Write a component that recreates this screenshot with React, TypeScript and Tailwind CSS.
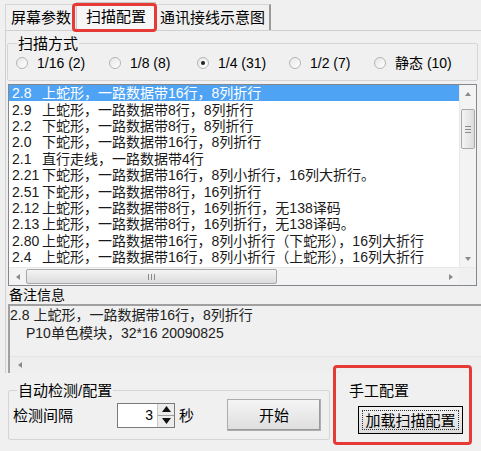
const rows: [string, string][] = [
  ["2.8", "上蛇形，一路数据带16行，8列折行"],
  ["2.9", "上蛇形，一路数据带8行，8列折行"],
  ["2.2", "下蛇形，一路数据带8行，8列折行"],
  ["2.0", "下蛇形，一路数据带16行，8列折行"],
  ["2.1", "直行走线，一路数据带4行"],
  ["2.21", "下蛇形，一路数据带16行，8列小折行，16列大折行。"],
  ["2.51", "下蛇形，一路数据带8行，16列折行"],
  ["2.12", "上蛇形，一路数据带8行，16列折行，无138译码"],
  ["2.13", "上蛇形，一路数据带8行，16列折行，无138译码。"],
  ["2.80", "上蛇形，一路数据带16行，8列小折行（下蛇形），16列大折行"],
  ["2.4", "上蛇形，一路数据带16行，8列小折行（上蛇形），16列大折行"],
];

const modes = [
  { label: "1/16 (2)", w: "w-[93px]" },
  { label: "1/8 (8)", w: "w-[88px]" },
  { label: "1/4 (31)", w: "w-[92px]", on: true },
  { label: "1/2 (7)", w: "w-[85px]" },
  { label: "静态 (10)", w: "w-[90px]" },
];

function Radio({ on }: { on?: boolean }) {
  return (
    <span className="w-[12px] h-[12px] rounded-full border border-[#b4b4b4] bg-gradient-to-br from-[#e6e6e6] to-white flex items-center justify-center shrink-0">
      {on && <span className="w-[4px] h-[4px] rounded-full bg-[#222]" />}
    </span>
  );
}

function Arrow({ dir }: { dir: "up" | "down" | "left" | "right" }) {
  const pts = {
    up: "1,6 4,2 7,6",
    down: "1,2 4,6 7,2",
    left: "6,1 2,4 6,7",
    right: "2,1 6,4 2,7",
  }[dir];
  return (
    <svg width="8" height="8" viewBox="0 0 8 8">
      <polygon points={pts} fill="#8a8a8a" />
    </svg>
  );
}

export default function App() {
  return (
    <div
      className="relative w-[481px] h-[451px] bg-[#f0f0f0] overflow-hidden text-black"
      style={{ fontFamily: '"Liberation Sans", "Noto Sans CJK SC", sans-serif' }}
    >
      {/* tabs */}
      <div className="flex items-end h-[30px] pl-[5px] text-[15px] leading-none">
        <div className="h-[26px] px-[5px] flex items-center border-t border-l border-[#d6d6d6]">屏幕参数</div>
        <div className="h-[28px] w-[80px] flex items-center justify-center bg-[#f6f6f6] border-t border-l border-r border-[#c8c8c8]">扫描配置</div>
        <div className="h-[26px] px-[4px] flex items-center border-t border-r-2 border-[#d6d6d6] border-r-[#9a9a9a]">通讯接线示意图</div>
      </div>

      {/* tab panel */}
      <div className="ml-[5px] w-[476px] h-[343px] border-t border-l border-[#d0d0d0] pl-[1px] flex flex-col">
        <fieldset className="mt-[3px] w-[471px] h-[47px] border border-[#d5d5d5] rounded-[2px] pl-[8px]">
          <legend className="ml-[1px] px-[1px] text-[15px] leading-[19px]">扫描方式</legend>
          <div className="flex items-center h-[20px] text-[14px] leading-none">
            {modes.map((m) => (
              <div key={m.label} className={`flex items-center gap-[9px] ${m.w}`}>
                <Radio on={m.on} />
                <span>{m.label}</span>
              </div>
            ))}
          </div>
        </fieldset>

        {/* list box */}
        <div className="mt-[3px] ml-[1px] w-[469px] h-[202px] border border-[#828790] bg-white flex flex-col">
          <div className="flex flex-1 min-h-0">
            <div className="flex-1 overflow-hidden text-[14px] leading-none">
              {rows.map(([n, t], i) => (
                <div
                  key={n}
                  className={`h-[16.4px] flex items-center whitespace-nowrap pl-[3px] ${i === 0 ? "bg-[#4fa3f5] text-white" : "text-[#1a1a1a]"}`}
                >
                  <span className="w-[30px] shrink-0">{n}</span>
                  <span>{t}</span>
                </div>
              ))}
            </div>
            <div className="w-[17px] bg-[#f3f3f3] flex flex-col items-center border-l border-[#e8e8e8]">
              <div className="h-[17px] flex items-center justify-center"><Arrow dir="up" /></div>
              <div className="mt-[7px] w-[14px] h-[40px] rounded-[2px] border border-[#a8a8a8] bg-gradient-to-r from-[#f4f4f4] to-[#dcdcdc] flex flex-col items-center justify-center gap-[2px]">
                <span className="w-[6px] h-px bg-[#8a8a8a]" />
                <span className="w-[6px] h-px bg-[#8a8a8a]" />
                <span className="w-[6px] h-px bg-[#8a8a8a]" />
              </div>
              <div className="flex-1" />
              <div className="h-[17px] flex items-center justify-center"><Arrow dir="down" /></div>
            </div>
          </div>
          <div className="h-[18px] flex bg-[#f3f3f3] border-t border-[#e8e8e8]">
            <div className="w-[17px] flex items-center justify-center"><Arrow dir="left" /></div>
            <div className="w-[251px] my-[1px] rounded-[2px] border border-[#a8a8a8] bg-gradient-to-b from-[#f4f4f4] to-[#dcdcdc] flex items-center justify-center gap-[2px]">
              <span className="w-px h-[6px] bg-[#8a8a8a]" />
              <span className="w-px h-[6px] bg-[#8a8a8a]" />
              <span className="w-px h-[6px] bg-[#8a8a8a]" />
            </div>
            <div className="flex-1" />
            <div className="w-[17px] flex items-center justify-center"><Arrow dir="right" /></div>
            <div className="w-[17px] bg-[#f0f0f0]" />
          </div>
        </div>

        <div className="mt-[1px] ml-[2px] h-[17px] text-[14px] leading-[17px]">备注信息</div>

        {/* remark box */}
        <div className="ml-[1px] flex-1 border-t-2 border-l-2 border-[#a0a0a0] flex flex-col">
          <div className="flex-1 text-[14px] leading-[18px] text-[#222]">
            <div className="flex whitespace-nowrap">
              <span className="pr-[4px]">2.8</span>
              <span>上蛇形，一路数据带16行，8列折行</span>
            </div>
            <div className="pl-[16px] whitespace-nowrap">P10单色模块，32*16 20090825</div>
          </div>
          <div className="h-[17px] bg-[#eeeeee] border-t border-[#e4e4e4] flex items-center pl-[6px]">
            <Arrow dir="left" />
          </div>
        </div>
      </div>

      {/* bottom groups */}
      <div className="flex mt-[8px] text-[15px] leading-none">
        <fieldset className="ml-[8px] w-[322px] h-[59px] border border-[#d5d5d5] rounded-[2px] px-[4px]">
          <legend className="ml-[4px] px-[1px] leading-[19px]">自动检测/配置</legend>
          <div className="flex items-center h-[36px] -mt-[3px]">
            <span className="w-[104px]">检测间隔</span>
            <div className="w-[58px] h-[25px] border border-[#7a7a7a] bg-white flex">
              <span className="flex-1 flex items-center justify-end pr-[4px] text-[14px]">3</span>
              <div className="w-[17px] flex flex-col border-l border-[#c8c8c8]">
                <div className="flex-1 flex items-center justify-center bg-[#ececec] border-b border-[#a0a0a0]">
                  <svg width="9" height="6" viewBox="0 0 9 6"><polygon points="0,6 4.5,0 9,6" fill="#111" /></svg>
                </div>
                <div className="flex-1 flex items-center justify-center bg-[#ececec]">
                  <svg width="9" height="6" viewBox="0 0 9 6"><polygon points="0,0 4.5,6 9,0" fill="#111" /></svg>
                </div>
              </div>
            </div>
            <span className="ml-[4px] w-[48px]">秒</span>
            <button className="w-[94px] h-[32px] border border-[#adadad] bg-gradient-to-b from-[#f5f5f5] to-[#dedede] shadow-[inset_-1px_-1px_0_#9a9a9a] text-[15px]">
              开始
            </button>
          </div>
        </fieldset>

        <fieldset className="ml-[7px] w-[134px] h-[59px] border border-transparent pl-[8px]">
          <legend className="ml-[2px] px-[1px] leading-[19px]">手工配置</legend>
          <button className="mt-[6px] ml-[12px] w-[105px] h-[28px] border border-black bg-gradient-to-b from-[#f2f2f2] to-[#dcdcdc] p-[3px] text-[15px]">
            <span className="block w-full h-full border border-dotted border-[#333] leading-[19px]">加载扫描配置</span>
          </button>
        </fieldset>
      </div>

      {/* annotation boxes */}
      <div className="absolute left-[72px] top-[3px] w-[85px] h-[29px] border-[3px] border-[#e53a35] rounded-[4px]" />
      <div className="absolute left-[333px] top-[365px] w-[139px] h-[80px] border-[3px] border-[#e53a35] rounded-[4px]" />
    </div>
  );
}
